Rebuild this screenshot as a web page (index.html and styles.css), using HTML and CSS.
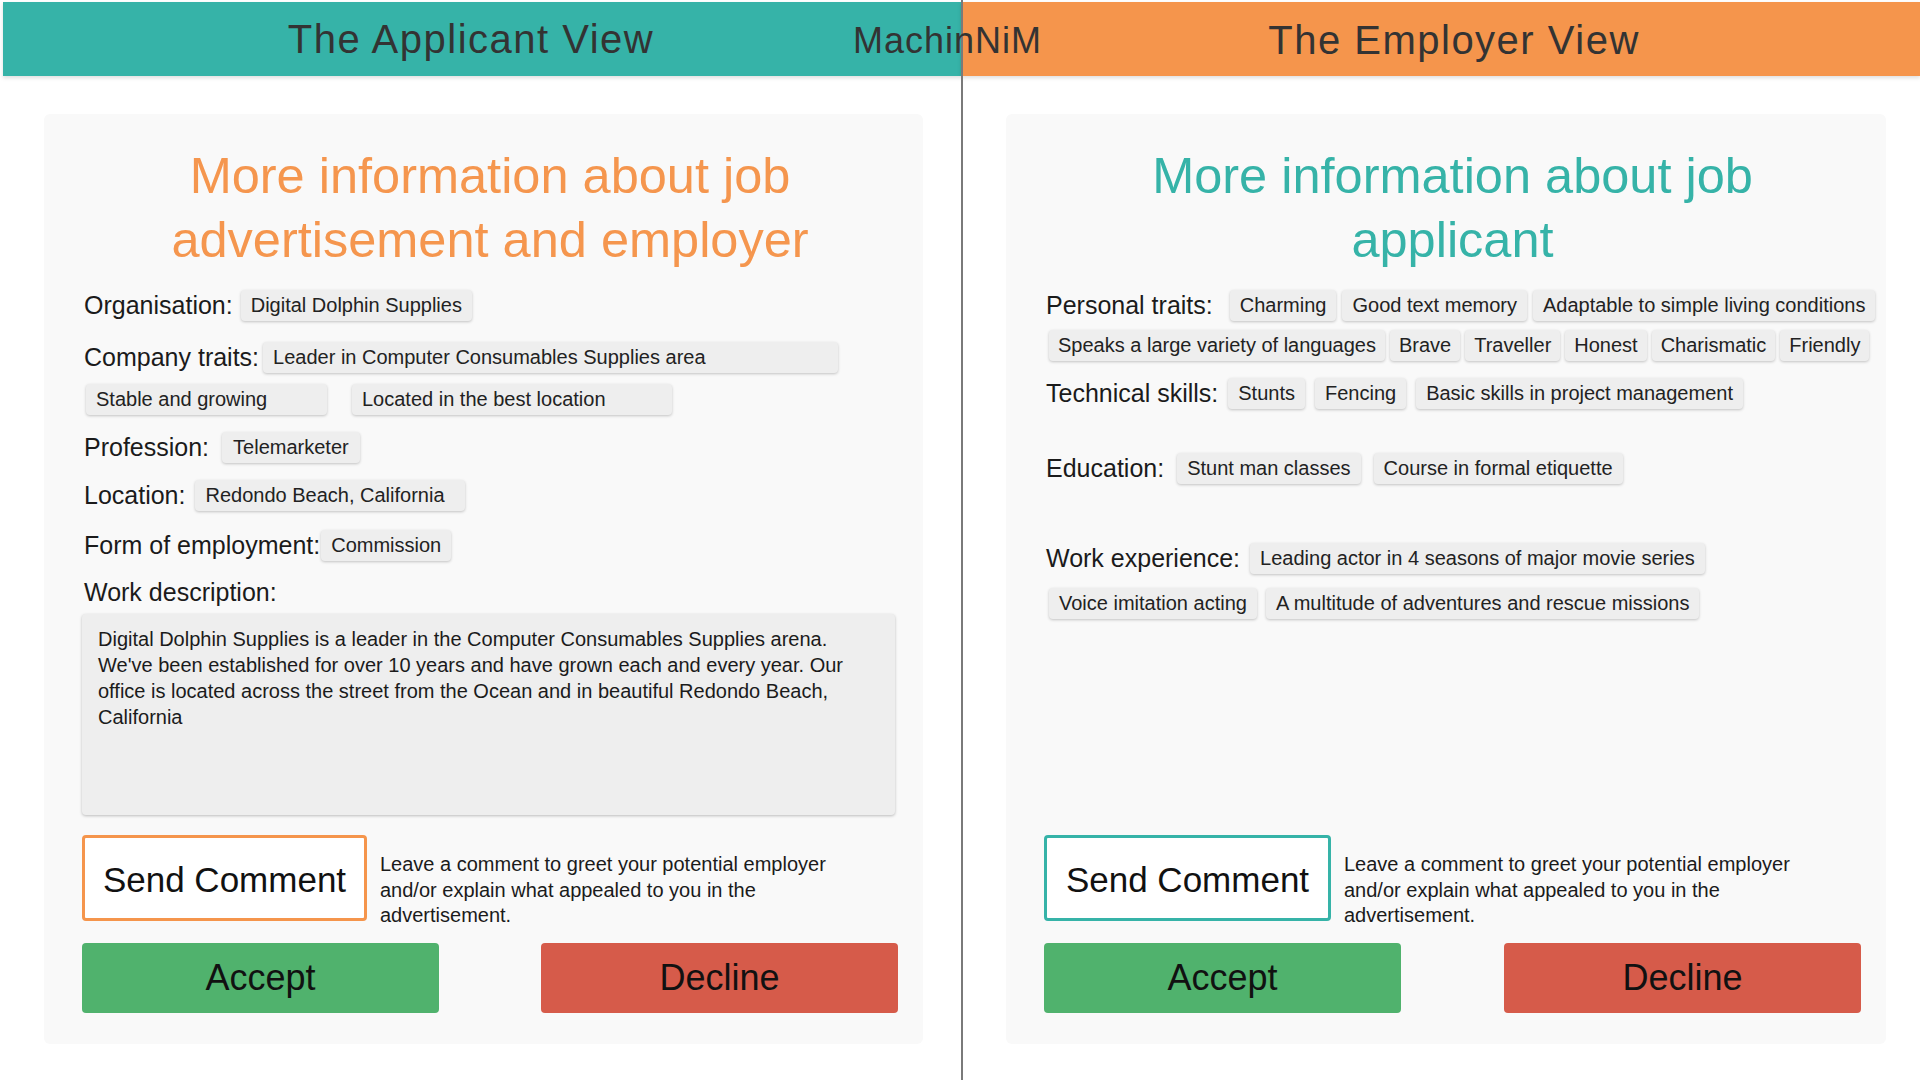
FILE: index.html
```html
<!DOCTYPE html>
<html lang="en">
<head>
<meta charset="utf-8">
<title>MachinNiM</title>
<link rel="stylesheet" href="styles.css">
</head>
<body>
<div class="page">
  <div class="col col--applicant">
    <header class="band band--teal"><h2 class="band__title">The Applicant View</h2></header>
    <section class="card">
      <h1 class="card__title card__title--orange">More information about job<br>advertisement and employer</h1>

      <div class="row row--first"><span class="label">Organisation:</span><span class="chip">Digital Dolphin Supplies</span></div>
      <div class="row row--company gap-xs"><span class="label">Company traits:</span><span class="chip chip--leader">Leader in Computer Consumables Supplies area</span></div>
      <div class="row row--cont row--cont-wide"><span class="chip chip--stable">Stable and growing</span><span class="chip chip--located">Located in the best location</span></div>
      <div class="row gap-l"><span class="label">Profession:</span><span class="chip chip--wide">Telemarketer</span></div>
      <div class="row gap-m"><span class="label">Location:</span><span class="chip chip--redondo">Redondo Beach, California</span></div>
      <div class="row row--form gap-none"><span class="label">Form of employment:</span><span class="chip">Commission</span></div>
      <div class="row row--desc-label"><span class="label">Work description:</span></div>
      <div class="desc">Digital Dolphin Supplies is a leader in the Computer Consumables Supplies arena.<br>We've been established for over 10 years and have grown each and every year. Our<br>office is located across the street from the Ocean and in beautiful Redondo Beach,<br>California</div>

      <div class="comment">
        <button class="send send--orange">Send Comment</button>
        <p class="help">Leave a comment to greet your potential employer<br>and/or explain what appealed to you in the<br>advertisement.</p>
      </div>
      <div class="actions">
        <button class="btn btn--accept">Accept</button>
        <button class="btn btn--decline">Decline</button>
      </div>
    </section>
  </div>

  <div class="col col--employer">
    <header class="band band--orange"><h2 class="band__title">The Employer View</h2></header>
    <section class="card card--employer">
      <h1 class="card__title card__title--teal">More information about job<br>applicant</h1>

      <div class="row row--first gap-xl"><span class="label">Personal traits:</span><span class="chip">Charming</span><span class="chip">Good text memory</span><span class="chip">Adaptable to simple living conditions</span></div>
      <div class="row row--cont row--cont-tight"><span class="chip">Speaks a large variety of languages</span><span class="chip">Brave</span><span class="chip">Traveller</span><span class="chip">Honest</span><span class="chip">Charismatic</span><span class="chip">Friendly</span></div>
      <div class="row gap-m"><span class="label">Technical skills:</span><span class="chip">Stunts</span><span class="chip">Fencing</span><span class="chip">Basic skills in project management</span></div>
      <div class="row row--edu gap-l"><span class="label">Education:</span><span class="chip">Stunt man classes</span><span class="chip">Course in formal etiquette</span></div>
      <div class="row row--work gap-m"><span class="label">Work experience:</span><span class="chip">Leading actor in 4 seasons of major movie series</span></div>
      <div class="row row--cont row--cont-work"><span class="chip">Voice imitation acting</span><span class="chip">A multitude of adventures and rescue missions</span></div>

      <div class="comment">
        <button class="send send--teal">Send Comment</button>
        <p class="help">Leave a comment to greet your potential employer<br>and/or explain what appealed to you in the<br>advertisement.</p>
      </div>
      <div class="actions">
        <button class="btn btn--accept">Accept</button>
        <button class="btn btn--decline">Decline</button>
      </div>
    </section>
  </div>

  <div class="divider"></div>
  <div class="brand">MachinNiM</div>
</div>
</body>
</html>
```

FILE: styles.css
```css
html, body {
  margin: 0;
  padding: 0;
  background: #ffffff;
}

body {
  font-family: "Liberation Sans", Arial, Helvetica, sans-serif;
  color: #1b1b1b;
}

.page {
  position: relative;
  display: flex;
  height: 1080px;
  box-sizing: border-box;
  padding: 2px 0 0 3px;
  overflow: hidden;
}

.col--applicant {
  width: 958px;
  flex: none;
}

.col--employer {
  width: 959px;
  flex: none;
}

/* header bands */
.band {
  height: 74px;
  box-sizing: border-box;
  display: flex;
  align-items: center;
  justify-content: center;
  box-shadow: 0 2px 4px rgba(0, 0, 0, 0.13);
}

.band--teal {
  background: #36b3a8;
  padding-right: 22px;
}

.band--orange {
  background: #f5954c;
  padding-left: 27px;
  padding-top: 2px;
}

.band__title {
  margin: 0;
  font-size: 40px;
  line-height: 73px;
  font-weight: normal;
  letter-spacing: 1.5px;
  color: #333333;
}

.brand {
  position: absolute;
  top: 4px;
  left: 853px;
  font-size: 36px;
  line-height: 73px;
  letter-spacing: 1px;
  color: #333333;
}

.divider {
  position: absolute;
  top: 0;
  bottom: 0;
  left: 961px;
  width: 2px;
  background: #7a7a7a;
}

/* cards */
.card {
  margin-top: 38px;
  height: 930px;
  box-sizing: border-box;
  padding: 30px 25px 31px 38px;
  background: #f9f9f9;
  border-radius: 6px;
  display: flex;
  flex-direction: column;
}

.col--applicant .card {
  margin-left: 41px;
  width: 879px;
}

.col--employer .card {
  margin-left: 45px;
  width: 880px;
}

.card__title {
  margin: 0 0 18px;
  font-size: 50.5px;
  line-height: 64px;
  font-weight: normal;
  text-align: center;
}

.card__title--orange { color: #f5964e; }
.card__title--teal { color: #36b3a8; }

/* rows of fields */
.row {
  display: flex;
  align-items: center;
  height: 31px;
  margin-top: 17px;
  gap: 8px;
  white-space: nowrap;
}

.row--first { margin-top: 0; }
.row--company { margin-top: 21px; }
.row--cont { margin-left: 4px; }
.row--cont-wide { margin-top: 11px; gap: 25px; }
.row--cont-tight { margin-top: 9px; gap: 5px; margin-left: 5px; }
.row--cont-tight .chip { padding: 0 9px; }
.row--cont-work { margin-top: 14px; gap: 9px; margin-left: 5px; }
.row--form { margin-top: 19px; }
.row--desc-label { margin-top: 16px; }
.row--edu { margin-top: 44px; }
.row--work { margin-top: 59px; }

.gap-none { gap: 1px; }
.gap-xs { gap: 4px; }
.gap-m { gap: 10px; }
.gap-l { gap: 13px; }
.gap-xl { gap: 6px; }
.gap-xl .label { margin-right: 11px; }

.label {
  font-size: 25px;
  line-height: 31px;
  color: #1b1b1b;
  padding-left: 2px;
}

.chip {
  display: inline-block;
  box-sizing: border-box;
  height: 31px;
  padding: 0 10px;
  font-size: 20px;
  line-height: 31px;
  color: #222222;
  background: #eeeeee;
  border-radius: 4px;
  box-shadow: 0 1px 3px rgba(0, 0, 0, 0.22);
}

.chip--wide { padding: 0 11px; }
.chip--leader { width: 575px; }
.chip--stable { width: 241px; }
.chip--located { width: 320px; }
.chip--redondo { width: 270px; }

/* description box */
.desc {
  margin-top: 6px;
  width: 813px;
  height: 201px;
  box-sizing: border-box;
  padding: 12px 16px 10px;
  font-size: 20px;
  line-height: 26px;
  color: #1b1b1b;
  background: #eeeeee;
  border-radius: 4px;
  box-shadow: 0 1px 3px rgba(0, 0, 0, 0.25);
  white-space: nowrap;
}

/* comment area */
.comment {
  margin-top: auto;
  height: 86px;
  display: flex;
  align-items: flex-start;
  gap: 13px;
}

.send {
  flex: none;
  width: 285px;
  height: 86px;
  box-sizing: border-box;
  border: 3px solid;
  border-radius: 4px;
  background: #ffffff;
  font-family: inherit;
  font-size: 35px;
  color: #111111;
  padding: 4px 0 0;
  text-align: center;
}

.send--orange { border-color: #f5954c; }
.send--teal { border-color: #36b3a8; width: 287px; }

.help {
  margin: 17px 0 0;
  font-size: 20px;
  line-height: 25.5px;
  color: #1b1b1b;
  white-space: nowrap;
}

/* action buttons */
.actions {
  margin-top: 22px;
  display: flex;
  justify-content: space-between;
}

.btn {
  width: 357px;
  height: 70px;
  border: none;
  border-radius: 4px;
  font-family: inherit;
  font-size: 36px;
  color: #111111;
  padding: 0;
}

.btn--accept { background: #50b26d; }
.btn--decline { background: #d65b4a; }
```
